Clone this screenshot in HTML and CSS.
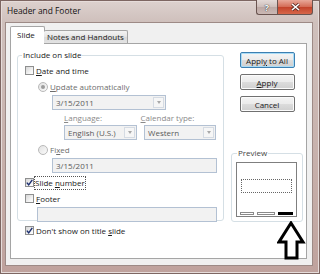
FILE: index.html
```html
<!DOCTYPE html>
<html lang="en">

<head>
  <meta charset="UTF-8">
  <meta name="viewport" content="width=device-width, initial-scale=1.0">
  <title>Header and Footer</title>
  <link rel="stylesheet" href="styles.css">
</head>

<body>
  <div class="window">
    <div class="titlebar">
      <span class="title">Header and Footer</span>
      <div class="caption-buttons">
        <span class="cap-btn help">?</span>
        <span class="cap-btn close">
          <svg width="9" height="8" viewBox="0 0 9 8">
            <path d="M1 1 L8 7 M8 1 L1 7" stroke="#5a2a22" stroke-width="3" />
            <path d="M1 1 L8 7 M8 1 L1 7" stroke="#fff" stroke-width="1.6" />
          </svg>
        </span>
      </div>
    </div>

    <div class="client">
      <div class="tabs">
        <span class="tab active">Slide</span>
        <span class="tab">Notes and Handouts</span>
      </div>

      <div class="panel">
        <div class="left">
          <fieldset class="group include">
            <legend>Include on slide</legend>

            <div class="row">
              <span class="box"></span>
              <span class="label"><u>D</u>ate and time</span>
            </div>

            <div class="row sub">
              <span class="radio on"></span>
              <span class="label dim"><u>U</u>pdate automatically</span>
            </div>

            <div class="combo wide">
              <span class="value">3/15/2011</span>
              <span class="drop"></span>
            </div>

            <div class="pair captions">
              <span class="caption"><u>L</u>anguage:</span>
              <span class="caption"><u>C</u>alendar type:</span>
            </div>

            <div class="pair">
              <div class="combo">
                <span class="value">English (U.S.)</span>
                <span class="drop"></span>
              </div>
              <div class="combo">
                <span class="value">Western</span>
                <span class="drop"></span>
              </div>
            </div>

            <div class="row sub fixed">
              <span class="radio"></span>
              <span class="label dim">Fi<u>x</u>ed</span>
            </div>

            <div class="field wide">3/15/2011</div>

            <div class="row">
              <span class="box checked">
                <svg width="7" height="7" viewBox="0 0 7 7">
                  <path d="M0.8 3.6 L2.7 5.8 L6.3 0.8" fill="none" stroke="#1c2f70" stroke-width="1.4" />
                </svg>
              </span>
              <span class="label focus">Slide <u>n</u>umber</span>
            </div>

            <div class="row">
              <span class="box"></span>
              <span class="label"><u>F</u>ooter</span>
            </div>

            <div class="field footer"></div>
          </fieldset>

          <div class="row title-slide">
            <span class="box checked">
              <svg width="7" height="7" viewBox="0 0 7 7">
                <path d="M0.8 3.6 L2.7 5.8 L6.3 0.8" fill="none" stroke="#1c2f70" stroke-width="1.4" />
              </svg>
            </span>
            <span class="label">Don't show on title <u>s</u>lide</span>
          </div>
        </div>

        <div class="right">
          <button class="btn default">Appl<u>y</u> to All</button>
          <button class="btn"><u>A</u>pply</button>
          <button class="btn">Cancel</button>

          <fieldset class="group preview">
            <legend>Preview</legend>
            <div class="thumb">
              <div class="placeholder"></div>
              <div class="bars">
                <span class="bar date"></span>
                <span class="bar foot"></span>
                <span class="bar num"></span>
              </div>
            </div>
          </fieldset>
        </div>
      </div>
    </div>

    <!-- annotation arrow pointing at the slide number bar -->
    <svg class="arrow" width="29" height="40" viewBox="0 0 29 40">
      <polygon points="14,2 26,21 20,21 20,37 9,37 9,21 2,21" fill="#fff" stroke="#000" stroke-width="3" />
    </svg>
  </div>
</body>

</html>
```

FILE: styles.css
```css
* {
  box-sizing: border-box;
}

body {
  margin: 0;
  font-family: "Open Sans", "Noto Sans", sans-serif;
  font-size: 8px;
  color: #1a1a1a;
}

u {
  text-decoration-thickness: 1px;
  text-underline-offset: 1px;
}

.window {
  position: relative;
  width: 320px;
  height: 274px;
  display: flex;
  flex-direction: column;
  padding: 0 7px 8px 5px;
  background: linear-gradient(to bottom, #ddd2cf 0, #cfc0bc 22px, #c7b0ab 60%, #bfa29d 100%);
  box-shadow: inset 0 0 0 1px #7d6662, inset 0 0 0 2px #e6dcda;
}

.titlebar {
  height: 22px;
  display: flex;
  justify-content: space-between;
  align-items: flex-start;
  margin-right: -7px;
  padding-right: 7px;
}

.title {
  padding: 5px 0 0 2px;
  font-size: 8.4px;
  color: #111;
}

.caption-buttons {
  display: flex;
}

.cap-btn {
  height: 15px;
  display: flex;
  align-items: center;
  justify-content: center;
  border: 1px solid #6a5450;
  border-top: none;
}

.help {
  width: 21px;
  border-radius: 0 0 0 3px;
  border-right: none;
  background: linear-gradient(to bottom, #e4dad7, #cdbdb9 50%, #bca8a4 51%, #cbb8b4);
  color: #fff;
  font-weight: bold;
  font-size: 9px;
  text-shadow: 0 0 1px #333, 0 0 1px #333;
}

.close {
  width: 36px;
  border-radius: 0 0 3px 0;
  background: linear-gradient(to bottom, #e8a899, #d36a54 50%, #c2422a 51%, #d7674a);
}

.client {
  flex: 1;
  display: flex;
  flex-direction: column;
  padding: 3px 5px 6px 4px;
  background: #f0f0f0;
  border: 1px solid #9d8a86;
}

/* tabs */

.tabs {
  height: 17px;
  display: flex;
  align-items: flex-end;
  position: relative;
  z-index: 1;
}

.tab {
  height: 13px;
  padding: 0 3px;
  line-height: 12px;
  border: 1px solid #a5a5a5;
  border-bottom: none;
  border-radius: 2px 2px 0 0;
  background: linear-gradient(to bottom, #f3f3f3, #e4e4e4 50%, #d9d9d9 51%, #e3e3e3);
}

.tab.active {
  width: 35px;
  height: 18px;
  margin-bottom: -1px;
  padding: 2px 0 0 6px;
  background: #fff;
}

.tab.active + .tab {
  margin-left: -1px;
  border-left: none;
}

.panel {
  flex: 1;
  display: flex;
  padding: 6px 0 0 6px;
  background: #fff;
  border: 1px solid #a5a5a5;
}

/* group boxes */

.group {
  margin: 0;
  border: 1px solid #d5dfe5;
  border-radius: 3px;
  min-width: 0;
}

.group legend {
  padding: 0 1px;
  line-height: 10px;
}

.include {
  width: 207px;
  height: 171px;
  padding: 0 6px 0 7px;
}

.include legend {
  margin-left: -3px;
}

/* checkbox and radio rows */

.row {
  height: 13px;
  display: flex;
  align-items: center;
  margin-top: 3px;
}

.include legend + .row {
  margin-top: 4px;
}

.row.sub {
  padding-left: 13px;
}

.row.fixed {
  margin-top: 3px;
}

.box {
  width: 9px;
  height: 9px;
  flex: none;
  display: flex;
  align-items: center;
  justify-content: center;
  border: 1px solid #8e8f8f;
  background: linear-gradient(135deg, #d6d6d6, #f6f6f6 70%, #fff);
}

.radio {
  width: 10px;
  height: 10px;
  flex: none;
  display: flex;
  align-items: center;
  justify-content: center;
  border: 1px solid #b9b9b9;
  border-radius: 50%;
  background: linear-gradient(135deg, #e2e2e2, #fafafa);
}

.radio.on::after {
  content: "";
  width: 4px;
  height: 4px;
  border-radius: 50%;
  background: #9c9c9c;
}

.label {
  margin-left: 2px;
  white-space: nowrap;
}

.label.dim {
  color: #6d6d6d;
}

.label.focus {
  margin-left: 0;
  padding: 0 1px 1px;
  outline: 1px dotted #555;
  outline-offset: -1px;
  line-height: 13px;
}

/* combo boxes and text fields */

.combo {
  height: 15px;
  display: flex;
  align-items: stretch;
  border: 1px solid #b3c1d3;
  background: #f2f2f2;
  color: #5a5a5a;
}

.combo .value {
  flex: 1;
  padding-left: 3px;
  line-height: 13px;
  white-space: nowrap;
  overflow: hidden;
}

.drop {
  width: 11px;
  margin: 1px;
  display: flex;
  align-items: center;
  justify-content: center;
  border: 1px solid #d5dbe3;
  background: #f6f6f6;
}

.drop::after {
  content: "";
  border-left: 2.5px solid transparent;
  border-right: 2.5px solid transparent;
  border-top: 3px solid #a8a8a8;
}

.combo.wide {
  width: 114px;
  margin: 2px 0 0 27px;
}

.pair {
  display: flex;
  gap: 7px;
  margin: 2px 0 0 39px;
}

.pair .combo {
  width: 73px;
}

.pair .combo + .combo {
  width: 72px;
}

.captions {
  height: 10px;
  margin-top: 3px;
  gap: 0;
  color: #8a8a8a;
  line-height: 10px;
}

.caption {
  width: 80px;
}

.field {
  height: 15px;
  padding-left: 3px;
  line-height: 13px;
  border: 1px solid #b3c1d3;
  background: #f2f2f2;
  color: #5a5a5a;
}

.field.wide {
  width: 165px;
  margin: 2px 0 0 27px;
}

.field.footer {
  width: 180px;
  margin: 2px 0 0 12px;
}

.title-slide {
  margin: 3px 0 0 8px;
}

/* right column */

.right {
  width: 72px;
  margin-left: 7px;
  display: flex;
  flex-direction: column;
  align-items: center;
  padding-top: 2px;
}

.btn {
  width: 55px;
  height: 16px;
  margin-bottom: 6px;
  padding: 0;
  font: inherit;
  color: #1a1a1a;
  border: 1px solid #707070;
  border-radius: 2px;
  background: linear-gradient(to bottom, #f4f4f4, #ebebeb 50%, #dcdcdc 51%, #cfcfcf);
  box-shadow: inset 0 0 0 1px #fbfbfb;
}

.btn.default {
  border-color: #3c7fb1;
  box-shadow: inset 0 0 0 1px #a9dcf6;
}

.preview {
  width: 72px;
  height: 74px;
  margin-top: 30px;
  padding: 0 5px 0 4px;
}

.preview legend {
  margin-left: 1px;
  color: #444;
}

.thumb {
  height: 55px;
  margin-top: 4px;
  display: flex;
  flex-direction: column;
  padding: 0 3px 1px 2px;
  border: 1px solid #7f7f7f;
  background: #fff;
}

.placeholder {
  width: 51px;
  height: 14px;
  margin: 16px 0 0 2px;
  border: 1px dotted #666;
}

.bars {
  display: flex;
  margin-top: auto;
  padding-left: 1px;
}

.bar {
  height: 3px;
  border: 1px solid #8a8a8a;
  background: #fff;
}

.bar.date {
  width: 14px;
}

.bar.foot {
  width: 18px;
  margin-left: 3px;
}

.bar.num {
  width: 15px;
  margin-left: 3px;
  border-color: #000;
  background: #000;
}

.arrow {
  position: absolute;
  left: 277px;
  top: 221px;
}
```
